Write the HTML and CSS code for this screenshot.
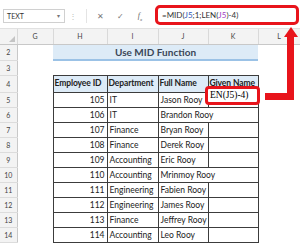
FILE: index.html
```html
<!DOCTYPE html>
<html lang="en">
<head>
  <meta charset="UTF-8">
  <title>Use MID Function</title>
  <link rel="stylesheet" href="styles.css">
</head>
<body>
  <div class="topbar">
    <div class="namebox">TEXT <span class="caret">&#9662;</span></div>
    <div class="grip">&#8942;</div>
    <div class="fx-buttons">
      <span class="btn">&#10005;</span>
      <span class="btn">&#10003;</span>
      <span class="btn fx">f<sub>x</sub></span>
    </div>
    <div class="formula">=MID(<span class="ref1">J5</span>;1;LEN(<span class="ref2">J5</span>)-4)</div>
  </div>

  <table class="sheet">
    <colgroup>
      <col class="c-rh"><col class="c-g"><col class="c-h"><col class="c-i"><col class="c-j"><col class="c-k"><col class="c-l">
    </colgroup>
    <tr class="heads">
      <th class="corner"><span class="tri"></span></th>
      <th>G</th><th>H</th><th>I</th><th>J</th><th>K</th><th>L</th>
    </tr>
    <tr class="r-title">
      <th class="rh">2</th><td></td>
      <td colspan="4" class="title">Use MID Function</td><td></td>
    </tr>
    <tr class="r-blank">
      <th class="rh">3</th><td></td><td></td><td></td><td></td><td></td><td></td>
    </tr>
    <tr class="r-head">
      <th class="rh">4</th><td></td>
      <td class="b hd">Employee ID</td><td class="b hd">Department</td><td class="b hd">Full Name</td><td class="b hd">Given Name</td><td></td>
    </tr>
    <tr><th class="rh">5</th><td></td><td class="b num">105</td><td class="b">IT</td><td class="b">Jason Rooy</td><td class="b"></td><td></td></tr>
    <tr><th class="rh">6</th><td></td><td class="b num">106</td><td class="b">IT</td><td class="b" colspan="2">Brandon Rooy</td><td></td></tr>
    <tr><th class="rh">7</th><td></td><td class="b num">107</td><td class="b">Finance</td><td class="b">Bryan Rooy</td><td class="b"></td><td></td></tr>
    <tr><th class="rh">8</th><td></td><td class="b num">108</td><td class="b">Finance</td><td class="b">Derek Rooy</td><td class="b"></td><td></td></tr>
    <tr><th class="rh">9</th><td></td><td class="b num">109</td><td class="b">Accounting</td><td class="b">Eric Rooy</td><td class="b"></td><td></td></tr>
    <tr><th class="rh">10</th><td></td><td class="b num">110</td><td class="b">Accounting</td><td class="b" colspan="2">Mrinmoy Rooy</td><td></td></tr>
    <tr><th class="rh">11</th><td></td><td class="b num">111</td><td class="b">Engineering</td><td class="b">Fabien Rooy</td><td class="b"></td><td></td></tr>
    <tr><th class="rh">12</th><td></td><td class="b num">112</td><td class="b">Engineering</td><td class="b">James Rooy</td><td class="b"></td><td></td></tr>
    <tr><th class="rh">13</th><td></td><td class="b num">113</td><td class="b">Finance</td><td class="b">Jeffrey Rooy</td><td class="b"></td><td></td></tr>
    <tr><th class="rh">14</th><td></td><td class="b num">114</td><td class="b">Accounting</td><td class="b">Leo Rooy</td><td class="b"></td><td></td></tr>
  </table>

  <!-- callout over the sheet -->
  <div class="edit-box">EN(J5)-4)</div>
  <div class="arrow-v"></div>
  <div class="arrow-h"></div>
  <div class="arrow-head"></div>
</body>
</html>
```

FILE: styles.css
```css
body {
  margin: 0;
  width: 300px;
  height: 244px;
  overflow: hidden;
  position: relative;
  background: #fff;
  font-family: Lato, "Liberation Sans", sans-serif;
  color: #222;
}
.topbar {
  height: 29px;
  background: #fff;
  display: flex;
  align-items: center;
  border-bottom: 1px solid #e1e1e1;
  box-sizing: border-box;
}
.namebox {
  margin-left: 3px;
  width: 62px;
  height: 14px;
  margin-top: 4px;
  border: 1px solid #d0d0d0;
  box-sizing: border-box;
  font-size: 7px;
  line-height: 12px;
  padding-left: 3px;
  color: #333;
  position: relative;
}
.caret {
  position: absolute;
  right: 4px;
  top: 0;
  font-size: 6px;
  color: #777;
}
.grip {
  width: 16px;
  margin-top: 4px;
  text-align: center;
  font-size: 8px;
  color: #bbb;
}
.fx-buttons {
  display: flex;
  margin-top: 4px;
  margin-left: 5px;
  gap: 6px;
  height: 14px;
  border-left: 1px solid #e4e4e4;
  padding-left: 6px;
}
.btn {
  width: 14px;
  text-align: center;
  font-size: 8px;
  line-height: 14px;
  color: #777;
}
.fx {
  font-family: "Liberation Serif", serif;
  font-style: italic;
  color: #666;
}
.fx sub {
  font-size: 5px;
}
.formula {
  margin-left: 8px;
  width: 144px;
  height: 20px;
  margin-top: 1px;
  border: 3px solid #e8141b;
  border-radius: 5px;
  box-sizing: border-box;
  font-size: 8px;
  line-height: 14px;
  padding-left: 4px;
  color: #333;
}
.ref1 { color: #2e58b8; }
.ref2 { color: #a03cc4; }

.sheet {
  border-collapse: collapse;
  table-layout: fixed;
  width: 300px;
  font-size: 8.5px;
}
.c-rh { width: 17px; }
.c-g { width: 36px; }
.c-h { width: 54px; }
.c-i { width: 51px; }
.c-j { width: 50px; }
.c-k { width: 50px; }
.c-l { width: 42px; }
.sheet td, .sheet th {
  padding: 0 2px;
  white-space: nowrap;
  overflow: hidden;
}
.heads th {
  height: 13px;
  background: #f3f3f3;
  border-right: 1px solid #d9d9d9;
  border-bottom: 1px solid #c8c8c8;
  font-weight: normal;
  font-size: 7px;
  color: #444;
}
.corner {
  position: relative;
}
.tri {
  position: absolute;
  right: 2px;
  bottom: 2px;
  border-left: 6px solid transparent;
  border-bottom: 6px solid #c4c4c4;
}
.rh {
  background: #f3f3f3;
  border-right: 1px solid #c8c8c8;
  border-bottom: 1px solid #dcdcdc;
  font-weight: normal;
  font-size: 7px;
  color: #444;
}
tr { height: 15px; }
.r-title { height: 16px; }
.r-head { height: 17px; }
.title {
  background: #ddebf7;
  border-bottom: 2px solid #9bc2e6;
  text-align: center;
  font-weight: bold;
  font-size: 10px;
  color: #3b4658;
}
.b {
  border: 1px solid #3c3c3c;
}
.sheet .hd {
  background: #ddebf7;
  font-weight: bold;
  text-align: left;
  vertical-align: top;
  padding: 2px 1px 0;
  letter-spacing: -0.1px;
}
.num {
  text-align: right;
}

.edit-box {
  position: absolute;
  left: 205px;
  top: 86px;
  width: 55px;
  height: 19px;
  border: 3px solid #e8141b;
  border-radius: 4px;
  box-sizing: border-box;
  font-family: "Liberation Serif", serif;
  font-size: 9.5px;
  line-height: 13px;
  padding-left: 2px;
  color: #000;
  background: #fff;
}
.arrow-v {
  position: absolute;
  left: 287px;
  top: 36px;
  width: 7px;
  height: 64px;
  background: #e8141b;
}
.arrow-h {
  position: absolute;
  left: 265px;
  top: 93px;
  width: 29px;
  height: 7px;
  background: #e8141b;
}
.arrow-head {
  position: absolute;
  left: 284px;
  top: 27px;
  border-left: 7px solid transparent;
  border-right: 7px solid transparent;
  border-bottom: 10px solid #e8141b;
}
```
